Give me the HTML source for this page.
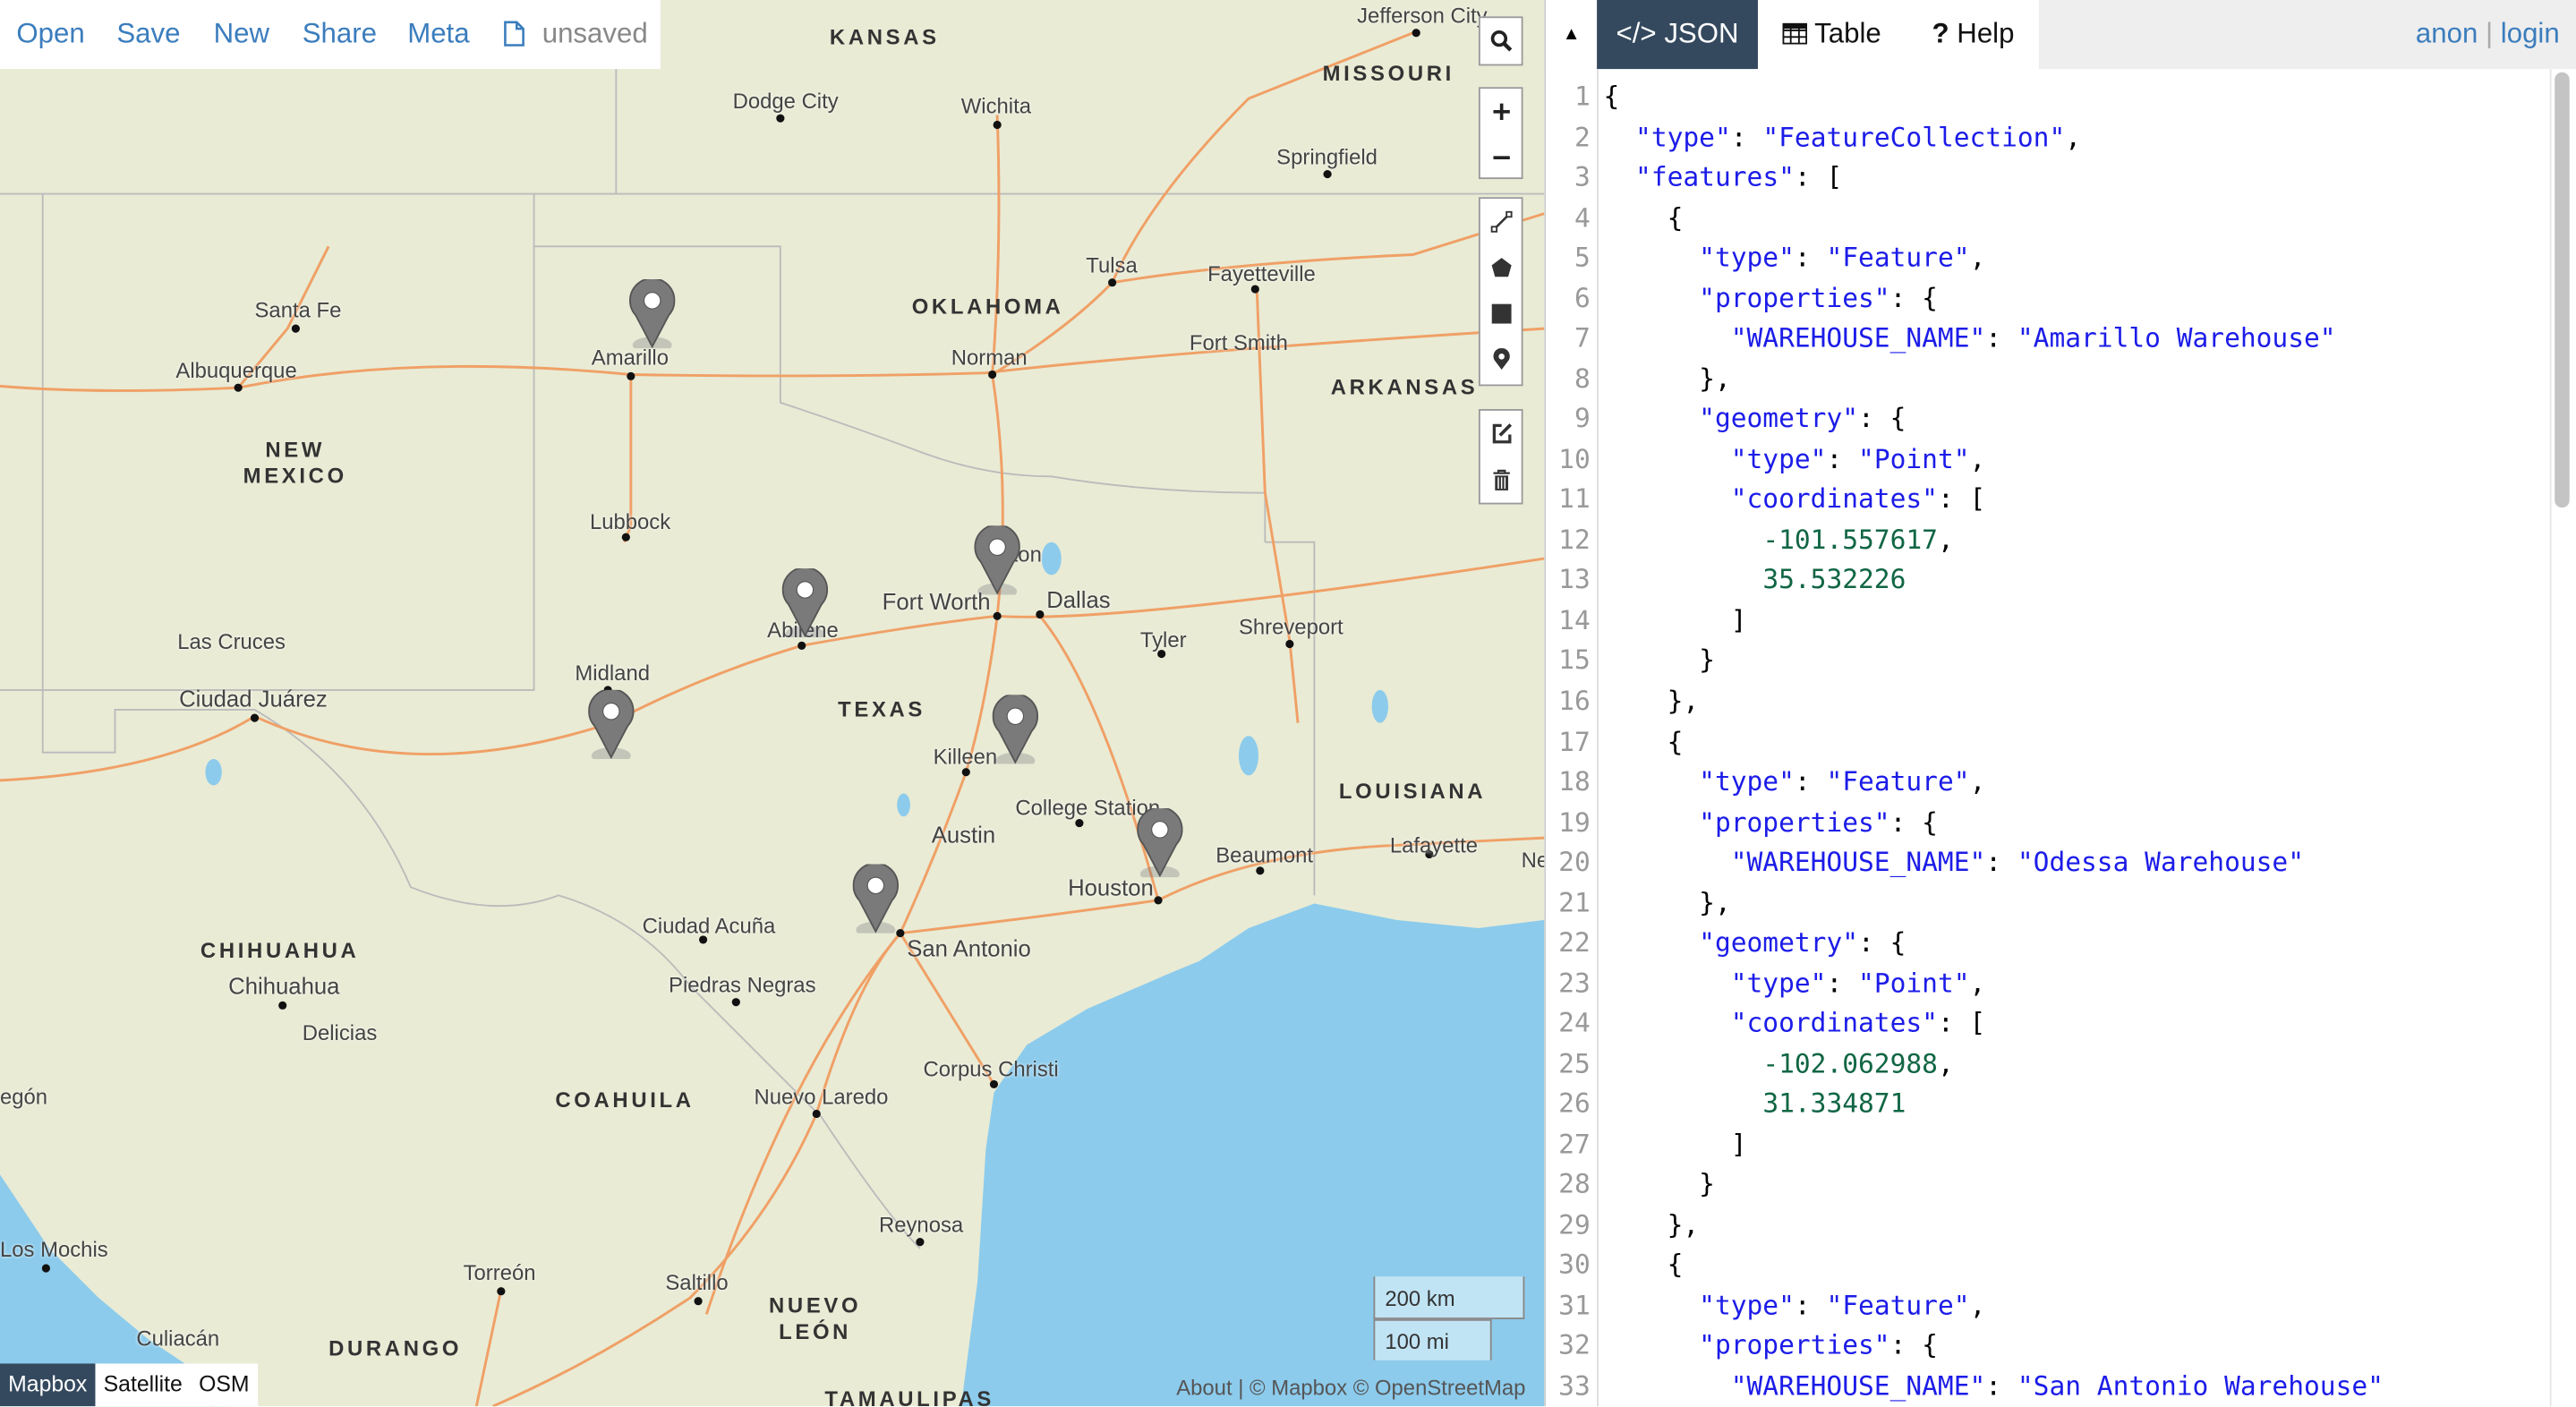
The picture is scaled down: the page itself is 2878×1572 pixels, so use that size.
<!DOCTYPE html>
<html><head><meta charset="utf-8"><style>
html,body{margin:0;padding:0;overflow:hidden;width:2878px;height:1572px;background:#fff}
#w{position:absolute;left:0;top:0;width:1568px;height:856px;transform:scale(1.8355);transform-origin:0 0;font-family:"Liberation Sans",sans-serif}
#map{position:absolute;left:0;top:0;width:940px;height:856px;background:#e9ebd5;overflow:hidden}
.lbl{position:absolute;font-size:13px;color:#444;white-space:nowrap;text-shadow:0 0 2px #fff}
.st{position:absolute;font-size:13px;font-weight:bold;letter-spacing:2px;color:#333;white-space:nowrap;text-align:center;line-height:16px}
.pin{position:absolute;width:28px;height:42px}
#top{position:absolute;left:0;top:0;width:402px;height:42px;background:#fff;font-size:17px;color:#3b7dbd}
#top span{position:absolute;top:11px}
.ctl{position:absolute;left:900px;width:27px;background:#fff;border:1px solid #999;box-sizing:border-box}
.ctl div{height:28px;display:flex;align-items:center;justify-content:center}
#panel{position:absolute;left:940px;top:0;width:628px;height:856px;background:#fff;border-left:1px solid #ccc;box-sizing:border-box}
#tabs{position:absolute;left:0;top:0;width:628px;height:42px;background:#eee}
.code{position:absolute;left:0;top:46px;font-family:"DejaVu Sans Mono",monospace;font-size:16.1px;line-height:24.53px;white-space:pre}
.k{color:#1c1ce8}.n{color:#164}
</style></head><body><div id="w">
<div id="map">
<svg width="940" height="856" style="position:absolute;left:0;top:0">
<g fill="none" stroke="#bbb" stroke-width="1">
<path d="M0 118 L940 118"/><path d="M325 118 L325 420 L0 420"/><path d="M375 42 L375 118"/>
<path d="M325 150 L475 150 L475 245 Q520 260 560 275 Q600 290 640 290 Q700 300 770 300 L770 330"/>
<path d="M26 118 L26 458 L70 458 L70 432 L155 432"/>
<path d="M155 432 Q220 470 250 540 Q300 560 340 545 Q390 560 420 600 Q460 640 500 680 Q540 740 560 760"/>
<path d="M770 330 L800 330 L800 545"/>
</g>
<g fill="none" stroke="#f0a066" stroke-width="1.6">
<path d="M0 235 Q60 240 145 236 Q250 215 384 228 Q500 230 600 227 Q700 215 940 200"/>
<path d="M384 228 L384 320 L380 330"/>
<path d="M0 475 Q100 470 155 436 Q250 480 372 440 Q430 410 488 393 Q560 380 607 375 Q680 380 940 340"/>
<path d="M607 70 Q610 150 604 228 Q615 300 607 375 Q600 430 588 470 Q570 520 548 568 Q480 650 430 800"/>
<path d="M633 375 Q670 420 705 548 Q760 520 840 515 L940 510"/>
<path d="M548 568 Q620 560 705 548"/>
<path d="M548 568 Q580 620 605 660"/>
<path d="M604 228 Q650 200 677 172 Q700 120 760 60 L860 20"/>
<path d="M677 172 Q750 160 860 155 L940 130"/>
<path d="M548 568 Q520 600 497 678 Q470 740 420 790 Q360 830 300 856"/>
<path d="M28 770 Q60 800 90 820 Q120 840 130 856"/>
<path d="M305 785 L290 856"/>
<path d="M145 236 L175 200 L200 150"/>
<path d="M765 175 L770 300 L785 390 L790 440"/>
</g>
<polygon fill="#8ccbec" points="730,585 760,565 800,550 850,560 900,565 940,560 940,856 585,856 595,780 600,700 605,665 625,636 662,614 713,592"/>
<polygon fill="#8ccbec" points="0,715 30,760 60,790 90,815 120,835 140,856 0,856"/>
<g fill="#8ccbec"><ellipse cx="760" cy="460" rx="6" ry="12"/><ellipse cx="640" cy="340" rx="6" ry="10"/><ellipse cx="840" cy="430" rx="5" ry="10"/><ellipse cx="130" cy="470" rx="5" ry="8"/><ellipse cx="550" cy="490" rx="4" ry="7"/></g>
<g fill="#111">
<circle cx="384" cy="229" r="2.5"/><circle cx="145" cy="236" r="2.5"/><circle cx="381" cy="327" r="2.5"/><circle cx="155" cy="437" r="2.5"/><circle cx="488" cy="393" r="2.5"/><circle cx="607" cy="375" r="2.5"/><circle cx="633" cy="374" r="2.5"/><circle cx="604" cy="228" r="2.5"/><circle cx="677" cy="172" r="2.5"/><circle cx="588" cy="470" r="2.5"/><circle cx="548" cy="568" r="2.5"/><circle cx="705" cy="548" r="2.5"/><circle cx="767" cy="530" r="2.5"/><circle cx="605" cy="660" r="2.5"/><circle cx="497" cy="678" r="2.5"/><circle cx="172" cy="612" r="2.5"/><circle cx="28" cy="772" r="2.5"/><circle cx="305" cy="786" r="2.5"/><circle cx="560" cy="756" r="2.5"/><circle cx="707" cy="398" r="2.5"/><circle cx="785" cy="392" r="2.5"/><circle cx="607" cy="76" r="2.5"/><circle cx="475" cy="72" r="2.5"/><circle cx="180" cy="200" r="2.5"/><circle cx="808" cy="106" r="2.5"/><circle cx="764" cy="176" r="2.5"/><circle cx="657" cy="501" r="2.5"/><circle cx="370" cy="420" r="2.5"/><circle cx="870" cy="520" r="2.5"/><circle cx="425" cy="792" r="2.5"/><circle cx="448" cy="610" r="2.5"/><circle cx="428" cy="572" r="2.5"/><circle cx="862" cy="20" r="2.5"/>
</g>
</svg>
<div class="st" style="left:505px;top:15px">KANSAS</div>
<div class="st" style="left:805px;top:37px">MISSOURI</div>
<div class="st" style="left:555px;top:179px">OKLAHOMA</div>
<div class="st" style="left:810px;top:228px">ARKANSAS</div>
<div class="st" style="left:148px;top:266px">NEW<br>MEXICO</div>
<div class="st" style="left:510px;top:424px">TEXAS</div>
<div class="st" style="left:815px;top:474px">LOUISIANA</div>
<div class="st" style="left:122px;top:571px">CHIHUAHUA</div>
<div class="st" style="left:338px;top:662px">COAHUILA</div>
<div class="st" style="left:468px;top:787px">NUEVO<br>LEÓN</div>
<div class="st" style="left:200px;top:813px">DURANGO</div>
<div class="st" style="left:502px;top:844px">TAMAULIPAS</div>
<div class="lbl" style="left:826px;top:2px">Jefferson City</div>
<div class="lbl" style="left:446px;top:54px">Dodge City</div>
<div class="lbl" style="left:585px;top:57px">Wichita</div>
<div class="lbl" style="left:777px;top:88px">Springfield</div>
<div class="lbl" style="left:155px;top:181px">Santa Fe</div>
<div class="lbl" style="left:661px;top:154px">Tulsa</div>
<div class="lbl" style="left:735px;top:159px">Fayetteville</div>
<div class="lbl" style="left:360px;top:210px">Amarillo</div>
<div class="lbl" style="left:107px;top:218px">Albuquerque</div>
<div class="lbl" style="left:579px;top:210px">Norman</div>
<div class="lbl" style="left:724px;top:201px">Fort Smith</div>
<div class="lbl" style="left:359px;top:310px">Lubbock</div>
<div class="lbl" style="left:616px;top:330px">ton</div>
<div class="lbl" style="left:537px;top:358px;font-size:14px">Fort Worth</div>
<div class="lbl" style="left:637px;top:357px;font-size:14px">Dallas</div>
<div class="lbl" style="left:467px;top:376px">Abilene</div>
<div class="lbl" style="left:694px;top:382px">Tyler</div>
<div class="lbl" style="left:754px;top:374px">Shreveport</div>
<div class="lbl" style="left:108px;top:383px">Las Cruces</div>
<div class="lbl" style="left:350px;top:402px">Midland</div>
<div class="lbl" style="left:109px;top:417px;font-size:14px">Ciudad Juárez</div>
<div class="lbl" style="left:568px;top:453px">Killeen</div>
<div class="lbl" style="left:618px;top:484px">College Station</div>
<div class="lbl" style="left:567px;top:500px;font-size:14px">Austin</div>
<div class="lbl" style="left:846px;top:507px">Lafayette</div>
<div class="lbl" style="left:740px;top:513px">Beaumont</div>
<div class="lbl" style="left:650px;top:532px;font-size:14px">Houston</div>
<div class="lbl" style="left:391px;top:556px">Ciudad Acuña</div>
<div class="lbl" style="left:552px;top:569px;font-size:14px">San Antonio</div>
<div class="lbl" style="left:139px;top:592px;font-size:14px">Chihuahua</div>
<div class="lbl" style="left:407px;top:592px">Piedras Negras</div>
<div class="lbl" style="left:184px;top:621px">Delicias</div>
<div class="lbl" style="left:562px;top:643px">Corpus Christi</div>
<div class="lbl" style="left:459px;top:660px">Nuevo Laredo</div>
<div class="lbl" style="left:0px;top:660px">egón</div>
<div class="lbl" style="left:535px;top:738px">Reynosa</div>
<div class="lbl" style="left:0px;top:753px">Los Mochis</div>
<div class="lbl" style="left:282px;top:767px">Torreón</div>
<div class="lbl" style="left:405px;top:773px">Saltillo</div>
<div class="lbl" style="left:83px;top:807px">Culiacán</div>
<div class="lbl" style="left:926px;top:516px">Ne</div>

<svg width="0" height="0" style="position:absolute"><defs><g id="p"><ellipse cx="14" cy="40" rx="12" ry="5" fill="#556" opacity=".25"/><path d="M14 41 L4 22 A13.5 13.5 0 1 1 24 22 Z" fill="#7a7a7a" stroke="#555" stroke-width="1"/><circle cx="14" cy="13" r="5" fill="#fff" stroke="#555" stroke-width=".6"/></g></defs></svg>
<svg class="pin" style="left:383px;top:170px"><use href="#p"/></svg>
<svg class="pin" style="left:476px;top:346px"><use href="#p"/></svg>
<svg class="pin" style="left:593px;top:320px"><use href="#p"/></svg>
<svg class="pin" style="left:358px;top:420px"><use href="#p"/></svg>
<svg class="pin" style="left:604px;top:423px"><use href="#p"/></svg>
<svg class="pin" style="left:519px;top:526px"><use href="#p"/></svg>
<svg class="pin" style="left:692px;top:492px"><use href="#p"/></svg>

<div id="top"><span style="left:10px">Open</span><span style="left:71px">Save</span><span style="left:130px">New</span><span style="left:184px">Share</span><span style="left:248px">Meta</span>
<svg style="position:absolute;left:306px;top:12px" width="14" height="17"><path d="M1.5 1.5 H8.5 L12.5 5.5 V15.5 H1.5 Z M8.5 1.5 V5.5 H12.5" fill="none" stroke="#3b7dbd" stroke-width="1.4"/></svg>
<span style="left:330px;color:#888">unsaved</span></div>

<div class="ctl" style="top:10px;height:30px"><div style="height:28px"><svg width="14" height="14"><circle cx="5.5" cy="5.5" r="4" fill="none" stroke="#222" stroke-width="2"/><path d="M8.5 8.5 L12.5 12.5" stroke="#222" stroke-width="2.4"/></svg></div></div>
<div class="ctl" style="top:53px;height:56px"><div><svg width="12" height="12"><path d="M6 1V11M1 6H11" stroke="#222" stroke-width="2"/></svg></div><div><svg width="12" height="12"><path d="M1 6H11" stroke="#222" stroke-width="2"/></svg></div></div>
<div class="ctl" style="top:120px;height:115px"><div><svg width="14" height="14"><path d="M3 11L11 3" stroke="#333" stroke-width="1.4"/><rect x="1" y="10" width="3" height="3" fill="#fff" stroke="#333"/><rect x="10" y="1" width="3" height="3" fill="#fff" stroke="#333"/></svg></div><div><svg width="14" height="14"><path d="M7 1L13 5.5L11 12.5H3L1 5.5Z" fill="#333"/></svg></div><div><svg width="12" height="12"><rect x="0" y="0" width="12" height="12" fill="#333"/></svg></div><div><svg width="12" height="14"><path d="M6 13L1.5 7A5 5 0 1 1 10.5 7Z" fill="#333"/><circle cx="6" cy="5" r="1.8" fill="#fff"/></svg></div></div>
<div class="ctl" style="top:249px;height:58px"><div><svg width="14" height="14"><path d="M7 2H2.5V12H12V7.5" fill="none" stroke="#333" stroke-width="1.8"/><path d="M6 8L12.5 1.5" stroke="#333" stroke-width="2"/></svg></div><div><svg width="12" height="14"><path d="M1 3H11M4 3V1.5H8V3" fill="none" stroke="#333" stroke-width="1.2"/><rect x="2" y="4.5" width="8" height="9" fill="#333"/><path d="M4 5.5V12.5M6 5.5V12.5M8 5.5V12.5" stroke="#fff" stroke-width=".8"/></svg></div></div>

<div style="position:absolute;left:836px;top:777px;width:92px;height:26px;background:#c1e4f5;border:1px solid #888;border-top:none;box-sizing:border-box;font-size:13px;color:#333;padding:6px 0 0 6px">200 km</div>
<div style="position:absolute;left:836px;top:803px;width:72px;height:25px;background:#c1e4f5;border:1px solid #888;border-bottom:none;box-sizing:border-box;font-size:13px;color:#333;padding:5px 0 0 6px">100 mi</div>
<div style="position:absolute;left:716px;top:837px;font-size:13px;color:#555">About | © Mapbox © OpenStreetMap</div>
<div style="position:absolute;left:0;top:830px;height:26px;width:157px;background:#fff;font-size:13.5px;color:#111">
<span style="position:absolute;left:0;top:0;width:58px;height:26px;background:#34495e;color:#fff;text-align:center;line-height:26px">Mapbox</span>
<span style="position:absolute;left:63px;top:5px">Satellite</span><span style="position:absolute;left:121px;top:5px">OSM</span></div>
</div>

<div id="panel">
<div id="tabs">
<div style="position:absolute;left:0;top:0;width:31px;height:42px;background:#fff;font-size:11px;text-align:center;line-height:42px">▲</div>
<div style="position:absolute;left:31px;top:0;width:98px;height:42px;background:#34495e;color:#fff;font-size:17px;line-height:42px;text-align:center">&lt;/&gt; JSON</div>
<div style="position:absolute;left:129px;top:0;width:171px;height:42px;background:#fff;font-size:17px;line-height:42px;color:#111"><span style="position:absolute;left:15px"><svg width="15" height="13" style="vertical-align:-1px"><rect x=".5" y=".5" width="14" height="12" fill="none" stroke="#111"/><path d="M0.5 4.5H14.5M0.5 8.5H14.5M5 .5V12.5M10 .5V12.5" stroke="#111"/><rect x=".5" y=".5" width="14" height="3" fill="#111"/></svg> Table</span><span style="position:absolute;left:106px"><b>?</b> Help</span></div>
<div style="position:absolute;right:11px;top:11px;font-size:17px;color:#3b7dbd">anon <span style="color:#aaa">|</span> login</div>
</div>
<div style="position:absolute;left:0;top:42px;width:31px;height:814px;background:#fff;border-right:1px solid #ddd"></div>
<div class="code" style="left:0;width:27px;text-align:right;color:#999;top:47px">1
2
3
4
5
6
7
8
9
10
11
12
13
14
15
16
17
18
19
20
21
22
23
24
25
26
27
28
29
30
31
32
33</div>
<div class="code" style="left:35px;top:47px">{
  <span class="k">"type"</span>: <span class="k">"FeatureCollection"</span>,
  <span class="k">"features"</span>: [
    {
      <span class="k">"type"</span>: <span class="k">"Feature"</span>,
      <span class="k">"properties"</span>: {
        <span class="k">"WAREHOUSE_NAME"</span>: <span class="k">"Amarillo Warehouse"</span>
      },
      <span class="k">"geometry"</span>: {
        <span class="k">"type"</span>: <span class="k">"Point"</span>,
        <span class="k">"coordinates"</span>: [
          <span class="n">-101.557617</span>,
          <span class="n">35.532226</span>
        ]
      }
    },
    {
      <span class="k">"type"</span>: <span class="k">"Feature"</span>,
      <span class="k">"properties"</span>: {
        <span class="k">"WAREHOUSE_NAME"</span>: <span class="k">"Odessa Warehouse"</span>
      },
      <span class="k">"geometry"</span>: {
        <span class="k">"type"</span>: <span class="k">"Point"</span>,
        <span class="k">"coordinates"</span>: [
          <span class="n">-102.062988</span>,
          <span class="n">31.334871</span>
        ]
      }
    },
    {
      <span class="k">"type"</span>: <span class="k">"Feature"</span>,
      <span class="k">"properties"</span>: {
        <span class="k">"WAREHOUSE_NAME"</span>: <span class="k">"San Antonio Warehouse"</span></div>
<div style="position:absolute;left:614px;top:44px;width:9px;height:265px;background:#c4c4c4;border-radius:5px"></div>
<div style="position:absolute;left:611px;top:42px;width:1px;height:814px;background:#e6e6e6"></div>
</div>
</div></body></html>
